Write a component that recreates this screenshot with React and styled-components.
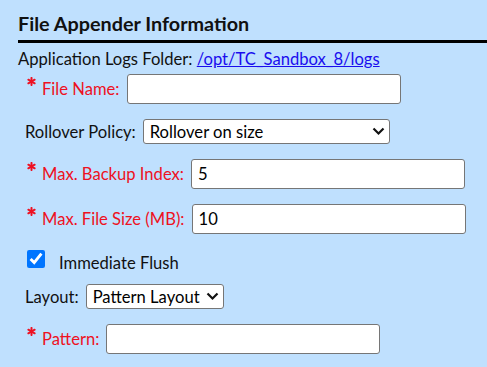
import styled, { createGlobalStyle } from "styled-components";

const BG = "#bfe0fe";
const RED = "#ee1122";
const FONT = "Lato, 'Liberation Sans', sans-serif";

const Global = createGlobalStyle`
  html, body {
    margin: 0;
    padding: 0;
    background: ${BG};
    font-family: ${FONT};
    color: #111;
  }
`;

const Panel = styled.div`
  padding: 10px 0 0 18px;
  width: 469px;
  height: 357px;
  background: ${BG};
  overflow: hidden;
`;

const Title = styled.h2`
  margin: 0;
  padding: 0 0 4px;
  font-size: 19.8px;
  font-weight: 700;
  line-height: 26px;
  border-bottom: 3px solid #000;
`;

const FolderLine = styled.div`
  margin-top: 6px;
  font-size: 16.6px;
  line-height: 20px;
  a {
    color: #1a0dee;
    text-decoration: underline;
  }
`;

const Form = styled.div`
  display: flex;
  flex-direction: column;
  gap: 15px;
  padding: 5px 0 0 7px;
`;

const Row = styled.div`
  display: flex;
  align-items: center;
  gap: 7px;
  font-size: 16.6px;
  height: ${(p) => p.h || 30}px;
`;

const Label = styled.label`
  display: flex;
  align-items: flex-start;
  gap: 6px;
  color: ${(p) => (p.required ? RED : "#111")};
  white-space: nowrap;
`;

const Star = styled.svg`
  width: 9px;
  height: 9px;
  margin-top: -2px;
  margin-left: 2px;
`;

const Input = styled.input`
  box-sizing: border-box;
  width: 274px;
  height: 30px;
  padding: 0 6px;
  border: 1px solid #767676;
  border-radius: 3px;
  background: #fff;
  font: 16.6px ${FONT};
  color: #000;
  outline: none;
`;

const SelectWrap = styled.div`
  position: relative;
  display: inline-flex;
`;

const Select = styled.select`
  box-sizing: border-box;
  appearance: none;
  width: ${(p) => (p.w ? `${p.w}px` : "auto")};
  height: 25px;
  padding: 0 23px 0 6px;
  border: 1px solid #767676;
  border-radius: 3px;
  background: #fff;
  font: 16.6px ${FONT};
  color: #000;
`;

const Chevron = styled.svg`
  position: absolute;
  right: 5px;
  top: 8px;
  width: 13px;
  height: 9px;
  pointer-events: none;
`;

const Check = styled.input`
  width: 18px;
  height: 18px;
  margin: 0 7px 0 2px;
  accent-color: #0075ff;
`;

const CheckLabel = styled.span`
  padding-top: 8px;
`;

const Asterisk = () => (
  <Star viewBox="0 0 10 10">
    <g stroke={RED} strokeWidth="2.2" strokeLinecap="round">
      <line x1="5" y1="1" x2="5" y2="9" />
      <line x1="1.5" y1="3" x2="8.5" y2="7" />
      <line x1="1.5" y1="7" x2="8.5" y2="3" />
    </g>
  </Star>
);

const Dropdown = ({ w, value, text }) => (
  <SelectWrap>
    <Select w={w} defaultValue={value}>
      <option value={value}>{text}</option>
    </Select>
    <Chevron viewBox="0 0 13 9">
      <path d="M1.5 1.5 L6.5 6.5 L11.5 1.5" fill="none" stroke="#111" strokeWidth="2.2" />
    </Chevron>
  </SelectWrap>
);

const Field = ({ label, required, value }) => (
  <Row>
    <Label required={required}>
      {required && <Asterisk />}
      {label}
    </Label>
    <Input defaultValue={value} />
  </Row>
);

const App = () => (
  <>
    <Global />
    <Panel>
      <Title>File Appender Information</Title>
      <FolderLine>
        Application Logs Folder: <a href="#">/opt/TC_Sandbox_8/logs</a>
      </FolderLine>
      <Form>
        <Field label="File Name:" required />
        <Row h={25}>
          <Label>Rollover Policy:</Label>
          <Dropdown w={247} value="size" text="Rollover on size" />
        </Row>
        <Field label="Max. Backup Index:" required value="5" />
        <Field label="Max. File Size (MB):" required value="10" />
        <Row h={20}>
          <Check type="checkbox" defaultChecked />
          <CheckLabel>Immediate Flush</CheckLabel>
        </Row>
        <Row h={25}>
          <Label>Layout:</Label>
          <Dropdown value="pattern" text="Pattern Layout" />
        </Row>
        <Field label="Pattern:" required />
      </Form>
    </Panel>
  </>
);

export default App;
